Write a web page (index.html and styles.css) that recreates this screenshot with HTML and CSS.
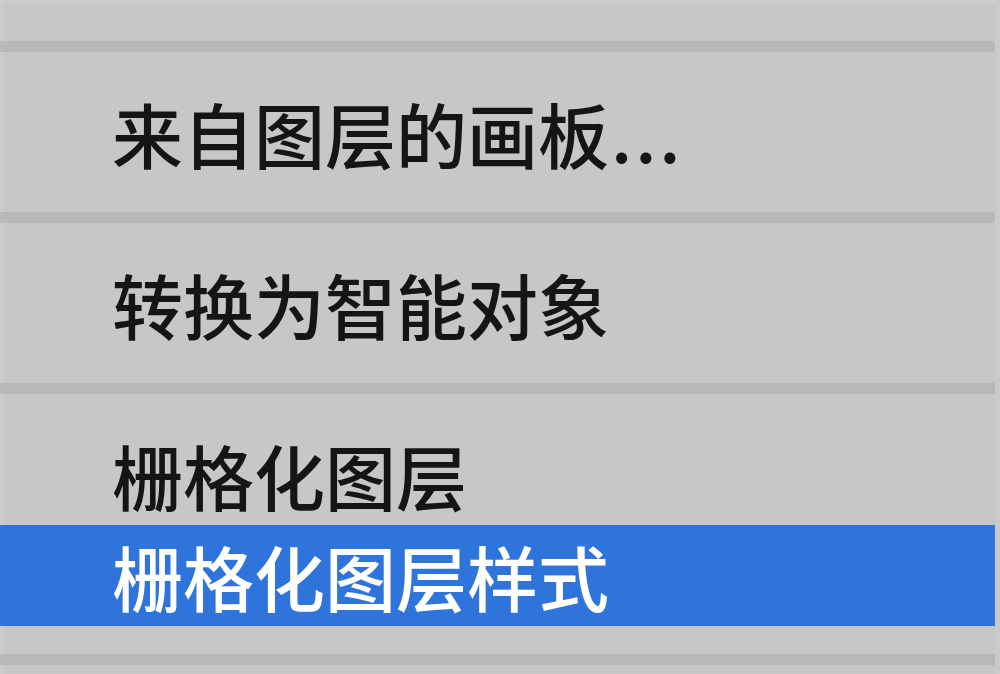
FILE: index.html
```html
<!DOCTYPE html>
<html lang="zh">
<head>
<meta charset="utf-8">
<link rel="stylesheet" href="styles.css">
</head>
<body>
<div class="menu">
  <div class="edge-top"></div>
  <div class="sep"></div>
  <div class="item">来自图层的画板<span class="dots">...</span></div>
  <div class="sep"></div>
  <div class="item">转换为智能对象</div>
  <div class="sep"></div>
  <div class="item">栅格化图层</div>
  <div class="item active">栅格化图层样式</div>
  <div class="sep"></div>
</div>
</body>
</html>
```
FILE: styles.css
```css
html, body {
  margin: 0;
  padding: 0;
  background: #c8c8c8;
  width: 1000px;
  height: 674px;
  overflow: hidden;
}
.menu {
  width: 1000px;
  height: 674px;
  background: #c7c7c7;
  padding-right: 5px;
  box-sizing: border-box;
  font-family: "Noto Sans CJK SC", "Noto Sans", sans-serif;
  font-weight: 500;
  color: #151515;
  box-shadow: inset 4px 0 0 #cbcbcb, inset -5px 0 0 #cacaca;
}
.edge-top {
  height: 12px;
  border-top: 3px solid #cdcdcd;
  box-sizing: border-box;
}
.sep {
  height: 11px;
  margin: 29px 0 30px;
  background: #b8b8b8;
}
.item {
  height: 101px;
  line-height: 101px;
  padding-left: 112px;
  font-size: 71px;
  white-space: nowrap;
}
.dots {
  letter-spacing: 3px;
  margin-left: 2px;
}
.active {
  background: #2f74db;
  color: #ffffff;
}
.active + .sep {
  margin-top: 28px;
}
```
